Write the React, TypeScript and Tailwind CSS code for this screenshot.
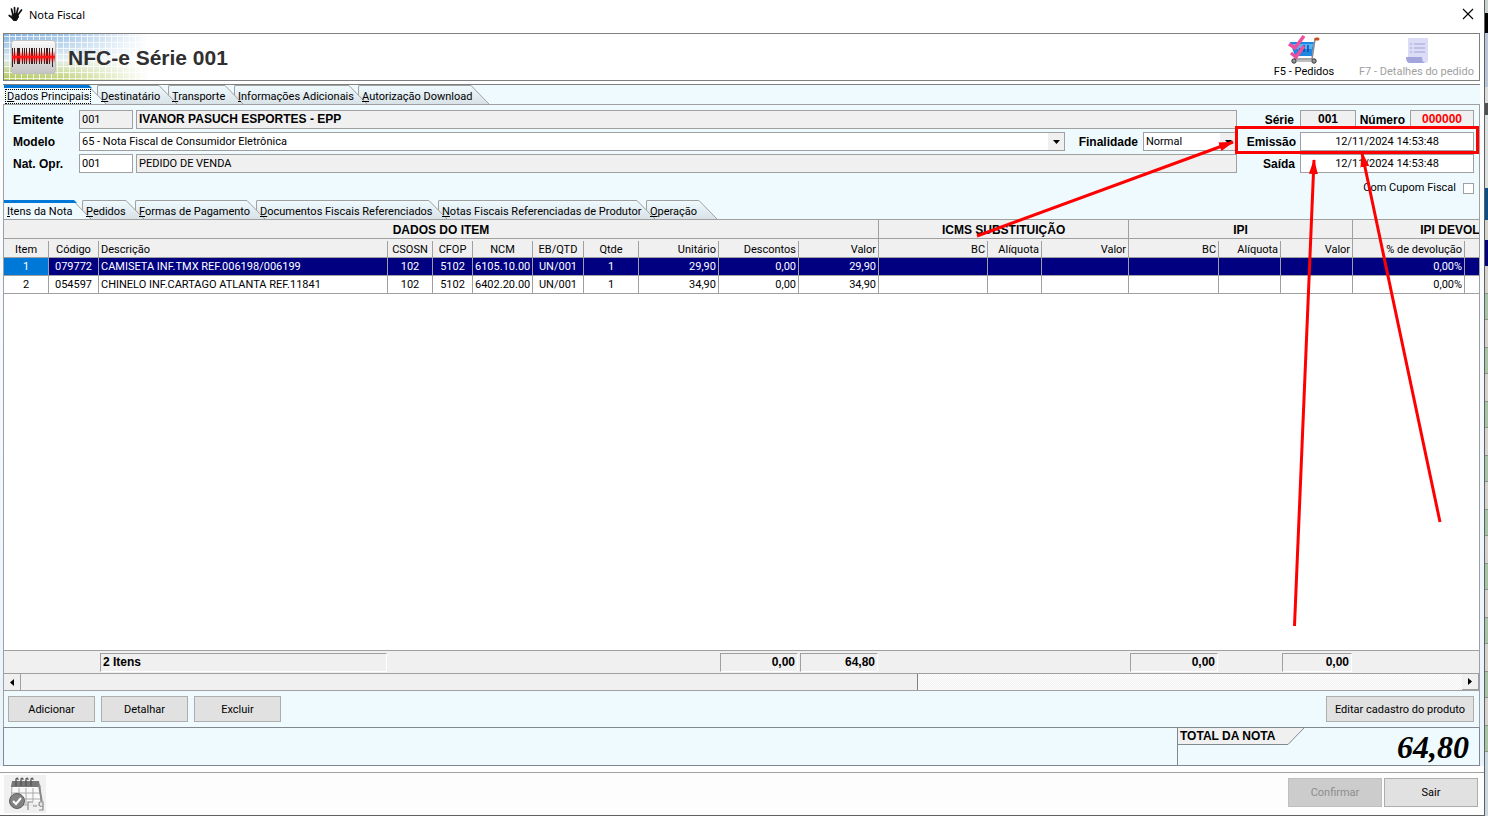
import { useState } from 'react';
import clsx from 'clsx';

interface Tab {
    label: string;
    width: string;
}

interface Column {
    label: string;
    width: number;
    align: 'left' | 'center' | 'right';
    groupEnd?: boolean;
}

interface Item {
    codigo: string;
    descricao: string;
    csosn: string;
    cfop: string;
    ncm: string;
    unidade: string;
    qtde: string;
    unitario: string;
    descontos: string;
    valor: string;
}

const MAIN_TABS: Tab[] = [
    { label: 'Dados Principais', width: 'w-[84px]' },
    { label: 'Destinatário', width: 'w-[62px]' },
    { label: 'Transporte', width: 'w-[57px]' },
    { label: 'Informações Adicionais', width: 'w-[115px]' },
    { label: 'Autorização Download', width: 'w-[113px]' },
];

const ITEM_TABS: Tab[] = [
    { label: 'Itens da Nota', width: 'w-[69px]' },
    { label: 'Pedidos', width: 'w-[44px]' },
    { label: 'Formas de Pagamento', width: 'w-[112px]' },
    { label: 'Documentos Fiscais Referenciados', width: 'w-[173px]' },
    { label: 'Notas Fiscais Referenciadas de Produtor', width: 'w-[199px]' },
    { label: 'Operação', width: 'w-[53px]' },
];

const COLUMNS: Column[] = [
    { label: 'Item', width: 45, align: 'center' },
    { label: 'Código', width: 50, align: 'center' },
    { label: 'Descrição', width: 289, align: 'left' },
    { label: 'CSOSN', width: 45, align: 'center' },
    { label: 'CFOP', width: 40, align: 'center' },
    { label: 'NCM', width: 60, align: 'center' },
    { label: 'EB/QTD', width: 51, align: 'center' },
    { label: 'Qtde', width: 55, align: 'center' },
    { label: 'Unitário', width: 80, align: 'right' },
    { label: 'Descontos', width: 80, align: 'right' },
    { label: 'Valor', width: 80, align: 'right', groupEnd: true },
    { label: 'BC', width: 109, align: 'right' },
    { label: 'Alíquota', width: 54, align: 'right' },
    { label: 'Valor', width: 87, align: 'right', groupEnd: true },
    { label: 'BC', width: 90, align: 'right' },
    { label: 'Alíquota', width: 62, align: 'right' },
    { label: 'Valor', width: 72, align: 'right', groupEnd: true },
    { label: '% de devolução', width: 112, align: 'right' },
    { label: '', width: 118, align: 'right', groupEnd: true },
];

const GROUPS = [
    { label: 'DADOS DO ITEM', span: 11 },
    { label: 'ICMS SUBSTITUIÇÃO', span: 3 },
    { label: 'IPI', span: 3 },
    { label: 'IPI DEVOLUÇÃO', span: 2 },
];

const ITEMS: Item[] = [
    { codigo: '079772', descricao: 'CAMISETA INF.TMX REF.006198/006199', csosn: '102', cfop: '5102', ncm: '6105.10.00', unidade: 'UN/001', qtde: '1', unitario: '29,90', descontos: '0,00', valor: '29,90' },
    { codigo: '054597', descricao: 'CHINELO INF.CARTAGO ATLANTA REF.11841', csosn: '102', cfop: '5102', ncm: '6402.20.00', unidade: 'UN/001', qtde: '1', unitario: '34,90', descontos: '0,00', valor: '34,90' },
];

// footer value by column index
const TOTALS: Record<number, string> = { 2: '2 Itens', 9: '0,00', 10: '64,80', 14: '0,00', 16: '0,00' };

const ALIGN = { left: 'text-left', center: 'text-center', right: 'text-right' };

const BOLD = "font-['Liberation_Sans',Arial,sans-serif] text-[12px] leading-4 font-bold";
const FIELD = 'h-[19px] min-w-0 border border-[#a0a0a0] px-[2px]';

export default function App() {
    const [mainTab, setMainTab] = useState(0);
    const [itemTab, setItemTab] = useState(0);
    const [selected, setSelected] = useState(0);

    return (
        <div className="relative flex min-h-screen overflow-hidden font-[Roboto,'Liberation_Sans',sans-serif] text-[11px] leading-4 text-black">
            <main className="flex min-w-0 flex-1 flex-col bg-white">
                <TitleBar />
                <div className="flex flex-1 flex-col bg-linear-to-b from-white to-[#e8f3fd] pr-[4px] pl-[3px]">
                    <Header />
                    <div className="mt-[3px] flex flex-1 flex-col border-t border-[#808080] bg-[#effaff]">
                        <TabBar tabs={MAIN_TABS} active={mainTab} onChange={setMainTab} focused />
                        <section className="flex flex-1 flex-col border-x border-t border-[#a0a0a0]">
                            <InvoiceForm />
                            <TabBar tabs={ITEM_TABS} active={itemTab} onChange={setItemTab} />
                            <ItemsGrid selected={selected} onSelect={setSelected} />
                            <HorizontalScroll />
                            <div className="flex gap-[6px] py-[5px] pr-[5px] pl-1">
                                <PushButton className="h-[26px] w-[87px]">Adicionar</PushButton>
                                <PushButton className="h-[26px] w-[87px]">Detalhar</PushButton>
                                <PushButton className="h-[26px] w-[87px]">Excluir</PushButton>
                                <PushButton className="ml-auto h-[26px] w-[148px]">Editar cadastro do produto</PushButton>
                            </div>
                        </section>
                        <TotalPanel />
                    </div>
                </div>
                <footer className="mt-[6px] flex h-[44px] items-start border-t border-b border-t-[#a0a0a0] border-b-[#606060] bg-[#fdfdfd] pt-[2px] pr-[6px] pl-1">
                    <button type="button" aria-label="Calendário" className="h-[38px] w-[42px] bg-[#f0f0f0]">
                        <CalendarIcon />
                    </button>
                    <div className="mt-[3px] ml-auto flex gap-[2px]">
                        <PushButton className="h-[29px] w-[94px]" disabled>Confirmar</PushButton>
                        <PushButton className="h-[29px] w-[94px]">Sair</PushButton>
                    </div>
                </footer>
            </main>
            <BackgroundStrip />
            <Annotations />
        </div>
    );
}

function TitleBar() {
    return (
        <header className="flex h-[33px] items-start px-2 pt-[6px]">
            <HandIcon />
            <h1 className="ml-[6px] font-['Noto_Sans',sans-serif] text-[11px] leading-[18px]">Nota Fiscal</h1>
            <button type="button" aria-label="Fechar" className="ml-auto p-[2px]">
                <svg width="12" height="12" viewBox="0 0 12 12" stroke="#000" strokeWidth="1.1">
                    <path d="M1 1l10 10M11 1L1 11" />
                </svg>
            </button>
        </header>
    );
}

function Header() {
    return (
        <div className="relative flex h-[48px] items-center border border-[#808080] bg-white">
            <HeaderPattern />
            <div className="relative ml-[7px]">
                <BarcodeIcon />
            </div>
            <h2 className="relative ml-3 pt-[2px] font-['Liberation_Sans',Arial,sans-serif] text-[21px] leading-6 font-bold text-[#303030]">NFC-e Série 001</h2>
            <div className="ml-auto flex">
                <button type="button" className="mr-[6px] flex w-[86px] flex-col items-center">
                    <CartIcon />
                    <span className="leading-4">F5 - Pedidos</span>
                </button>
                <button type="button" disabled className="flex w-[126px] flex-col items-center pl-px text-[#a0a0a0]">
                    <ScrollIcon />
                    <span className="leading-4 whitespace-nowrap">F7 - Detalhes do pedido</span>
                </button>
            </div>
        </div>
    );
}

interface TabBarProps {
    tabs: Tab[];
    active: number;
    onChange: (index: number) => void;
    focused?: boolean;
}

function TabBar({ tabs, active, onChange, focused }: TabBarProps) {
    return (
        <div role="tablist" className={clsx('isolate flex h-[19px]', focused && 'pl-px')}>
            {tabs.map((tab, i) => (
                <button
                    key={tab.label}
                    type="button"
                    role="tab"
                    aria-selected={i === active}
                    onClick={() => onChange(i)}
                    className={clsx('relative mr-[9px] h-full shrink-0', tab.width)}
                >
                    <span
                        className={clsx(
                            'absolute inset-0 z-0',
                            i === active
                                ? 'border-t-[3px] border-[#0078d7] bg-[#effaff]'
                                : 'rounded-tl-[2px] border-t border-l border-[#a0a0a0] bg-linear-to-b from-[#effaff] to-[#d9e2e6]'
                        )}
                    />
                    <TabSlant active={i === active} />
                    <span className={clsx('relative z-20 flex h-full items-end whitespace-nowrap', i > 0 ? 'pl-1' : focused ? 'pl-px' : 'pl-[3px]')}>
                        <span className={clsx('h-[15px]', focused && i === active ? 'border border-dotted border-black px-px leading-[13px]' : 'leading-4')}>
                            <span className="underline decoration-1 underline-offset-1">{tab.label[0]}</span>
                            {tab.label.slice(1)}
                        </span>
                    </span>
                </button>
            ))}
        </div>
    );
}

function TabSlant({ active }: { active: boolean }) {
    return (
        <svg className="absolute top-0 left-full z-10" width="18" height="19" viewBox="0 0 18 19">
            <defs>
                <linearGradient id="tab-fill" x1="0" y1="0" x2="0" y2="1">
                    <stop offset="0" stopColor="#effaff" />
                    <stop offset="1" stopColor="#d9e2e6" />
                </linearGradient>
            </defs>
            <path d="M0 0L18 19H0z" fill={active ? '#effaff' : 'url(#tab-fill)'} />
            <path d="M0 0.5L18 19" stroke="#a0a0a0" />
            {active && <path d="M0 0h1l3 3H0z" fill="#0078d7" />}
        </svg>
    );
}

function InvoiceForm() {
    const label = clsx(BOLD, 'whitespace-nowrap');
    return (
        <form className="h-[95px] pt-[5px] pr-[5px] pl-[9px]">
            <div className="flex">
                <div className="flex min-w-0 flex-1 flex-col gap-[3px]">
                    <div className="flex items-center gap-[3px]">
                        <label htmlFor="emitente" className={clsx(label, 'w-[63px]')}>Emitente</label>
                        <input id="emitente" readOnly defaultValue="001" className={clsx(FIELD, 'w-[54px] bg-[#f0f0f0]')} />
                        <input aria-label="Nome do emitente" readOnly defaultValue="IVANOR PASUCH ESPORTES - EPP" className={clsx(FIELD, BOLD, 'flex-1 bg-[#f0f0f0] pb-[2px]')} />
                    </div>
                    <div className="flex items-center">
                        <label htmlFor="modelo" className={clsx(label, 'w-[66px]')}>Modelo</label>
                        <Dropdown id="modelo" value="65 - Nota Fiscal de Consumidor Eletrônica" className="flex-1" />
                        <label htmlFor="finalidade" className={clsx(label, 'w-[78px] pr-[5px] text-right')}>Finalidade</label>
                        <Dropdown id="finalidade" value="Normal" className="w-[94px]" />
                    </div>
                    <div className="flex items-center gap-[3px]">
                        <label htmlFor="natureza" className={clsx(label, 'w-[63px]')}>Nat. Opr.</label>
                        <input id="natureza" defaultValue="001" className={clsx(FIELD, 'w-[54px] bg-white')} />
                        <input aria-label="Descrição da natureza" readOnly defaultValue="PEDIDO DE VENDA" className={clsx(FIELD, 'flex-1 bg-[#f0f0f0]')} />
                    </div>
                </div>
                <div className="flex w-[237px] flex-col gap-[3px]">
                    <div className="flex items-center">
                        <label htmlFor="serie" className={clsx(label, 'w-[63px] pr-[6px] text-right')}>Série</label>
                        <input id="serie" readOnly defaultValue="001" className={clsx(FIELD, BOLD, 'w-[56px] bg-[#f0f0f0] pb-[2px] text-center')} />
                        <label htmlFor="numero" className={clsx(label, 'w-[54px] pr-[5px] text-right')}>Número</label>
                        <input id="numero" readOnly defaultValue="000000" className={clsx(FIELD, BOLD, 'w-[64px] bg-[#f0f0f0] pb-[2px] text-center text-[#ff0000]')} />
                    </div>
                    <div className="flex items-center">
                        <label htmlFor="emissao" className={clsx(label, 'w-[63px] pr-1 text-right')}>Emissão</label>
                        <input id="emissao" defaultValue="12/11/2024 14:53:48" className={clsx(FIELD, 'flex-1 bg-white text-center')} />
                    </div>
                    <div className="flex items-center">
                        <label htmlFor="saida" className={clsx(label, 'w-[63px] pr-[5px] text-right')}>Saída</label>
                        <input id="saida" defaultValue="12/11/2024 14:53:48" className={clsx(FIELD, 'flex-1 bg-white text-center')} />
                    </div>
                </div>
            </div>
            <div className="mt-[7px] flex items-center justify-end gap-[7px]">
                <label htmlFor="cupom">Com Cupom Fiscal</label>
                <input id="cupom" type="checkbox" className="size-[11px] appearance-none border border-[#a0a0a0] bg-white checked:bg-[#0078d7]" />
            </div>
        </form>
    );
}

function Dropdown({ id, value, className }: { id: string; value: string; className: string }) {
    return (
        <div className={clsx('relative min-w-0', className)}>
            <select id={id} defaultValue={value} className="block h-[19px] w-full appearance-none border border-[#a0a0a0] bg-white px-[2px] pt-px leading-4">
                <option>{value}</option>
            </select>
            <span className="pointer-events-none absolute top-px right-px flex h-[17px] w-4 items-center justify-center bg-[#f0f0f0]">
                <svg width="7" height="4" viewBox="0 0 7 4"><path d="M0 0h7L3.5 4z" /></svg>
            </span>
        </div>
    );
}

function GridColumns() {
    return (
        <colgroup>
            {COLUMNS.map((col, i) => (
                <col key={i} style={{ width: col.width }} />
            ))}
        </colgroup>
    );
}

function ItemsGrid({ selected, onSelect }: { selected: number; onSelect: (index: number) => void }) {
    return (
        <div className="flex flex-1 flex-col overflow-hidden border-t border-[#a0a0a0] bg-white">
            <div className="flex-1">
                <table className="w-[1579px] table-fixed border-separate border-spacing-0">
                    <GridColumns />
                    <thead className="bg-[#f0f0f0]">
                        <tr>
                            {GROUPS.map(group => (
                                <th key={group.label} colSpan={group.span} className={clsx(BOLD, 'h-[19px] border-r border-b border-[#a0a0a0] px-0 pt-[2px] pb-0')}>
                                    {group.label}
                                </th>
                            ))}
                        </tr>
                        <tr>
                            {COLUMNS.map((col, i) => (
                                <th key={i} className={clsx('h-[19px] border-b border-[#a0a0a0] p-0 font-normal', col.groupEnd && 'border-r')}>
                                    <div className={clsx('mt-[2px] h-4 px-[2px] leading-[18px] whitespace-nowrap', ALIGN[col.align], !col.groupEnd && 'border-r border-[#a0a0a0]')}>
                                        {col.label}
                                    </div>
                                </th>
                            ))}
                        </tr>
                    </thead>
                    <tbody>
                        {ITEMS.map((item, row) => (
                            <tr key={item.codigo} onClick={() => onSelect(row)} className={row === selected ? 'bg-[#000080] text-white' : 'bg-white'}>
                                {[String(row + 1), ...Object.values(item), '', '', '', '', '', '', '0,00%', ''].map((value, i) => (
                                    <td
                                        key={i}
                                        className={clsx(
                                            'h-[18px] border-r border-b border-[#a0a0a0] px-[2px] pt-px pb-0 leading-4 whitespace-nowrap',
                                            ALIGN[COLUMNS[i].align],
                                            i === 0 && row === selected && 'bg-[#0078d7]'
                                        )}
                                    >
                                        {value}
                                    </td>
                                ))}
                            </tr>
                        ))}
                    </tbody>
                </table>
            </div>
            <div className="border-t border-[#a0a0a0] bg-[#f0f0f0] pt-[2px] pb-px">
                <table className="w-[1579px] table-fixed border-separate border-spacing-0">
                    <GridColumns />
                    <tbody>
                        <tr>
                            {COLUMNS.map((col, i) => (
                                <td key={i} className="h-[19px] px-px py-0">
                                    {TOTALS[i] && (
                                        <div className={clsx(BOLD, 'h-[19px] border border-t-[#a0a0a0] border-r-white border-b-white border-l-[#a0a0a0] px-[2px]', ALIGN[col.align])}>
                                            {TOTALS[i]}
                                        </div>
                                    )}
                                </td>
                            ))}
                        </tr>
                    </tbody>
                </table>
            </div>
        </div>
    );
}

function HorizontalScroll() {
    return (
        <div className="flex h-[18px] border-t border-b border-[#a0a0a0] bg-[repeating-conic-gradient(#f0f0f0_0_25%,#ffffff_0_50%)] bg-size-[2px_2px]">
            <button type="button" aria-label="Rolar para a esquerda" className="flex w-[17px] items-center justify-center border-r border-[#a0a0a0] bg-[#f0f0f0]">
                <svg width="4" height="7" viewBox="0 0 4 7"><path d="M4 0v7L0 3.5z" /></svg>
            </button>
            <div className="flex-28 border-r border-[#808080] bg-[#f0f0f0]" />
            <div className="flex-17" />
            <button type="button" aria-label="Rolar para a direita" className="flex w-[17px] items-center justify-center border-r border-b border-[#a0a0a0] bg-[#f0f0f0]">
                <svg width="4" height="7" viewBox="0 0 4 7"><path d="M0 0v7l4-3.5z" /></svg>
            </button>
        </div>
    );
}

function PushButton({ children, className, disabled }: { children: string; className: string; disabled?: boolean }) {
    return (
        <button
            type="button"
            disabled={disabled}
            className={clsx('border pt-px', disabled ? 'border-[#bfbfbf] bg-[#cccccc] text-[#8c8c8c]' : 'border-[#adadad] bg-[#e1e1e1]', className)}
        >
            {children}
        </button>
    );
}

function TotalPanel() {
    return (
        <div className="flex h-[39px] justify-end border border-[#808890] bg-[#effaff]">
            <div className="flex w-[302px] items-start justify-between border-l border-[#808890]">
                <div className={clsx('flex h-[17px]', BOLD)}>
                    <span className="w-[102px] border-b border-[#808890] bg-[#f0f0f0] pl-[2px] whitespace-nowrap">TOTAL DA NOTA</span>
                    <svg width="24" height="17" viewBox="0 0 24 17">
                        <path d="M0 0h24L8 16.500H0z" fill="#f0f0f0" />
                        <path d="M0 16.500H8L24 0" fill="none" stroke="#808890" />
                    </svg>
                </div>
                <output className="pr-[10px] font-['Liberation_Serif','Times_New_Roman',serif] text-[32px] leading-[38px] font-bold italic">64,80</output>
            </div>
        </div>
    );
}

/* ---- drawings ---- */

function HandIcon() {
    return (
        <svg width="15" height="16" viewBox="0 0 15 16" fill="none" stroke="#111" strokeLinecap="round">
            <path d="M4.500 8.500L9.500 7.500 10.500 11 8.500 14.500H5.500L4 12z" fill="#111" />
            <path d="M5 9L3.500 3M6.800 8L6.500 1.500M8.500 8L10 2M9.800 9L13.500 4M5 12.500L1.200 9.500" strokeWidth="1.700" />
        </svg>
    );
}

function HeaderPattern() {
    return (
        <svg className="absolute top-0 left-0" width="145" height="46" viewBox="0 0 145 46">
            <defs>
                <linearGradient id="sky" x1="0" y1="0" x2="0" y2="1">
                    <stop offset="0" stopColor="#86b4e2" />
                    <stop offset=".55" stopColor="#e2eef0" />
                    <stop offset="1" stopColor="#b0c650" />
                </linearGradient>
                <linearGradient id="fade" x1="0" y1="0" x2="1" y2="0">
                    <stop offset="0" stopColor="#fff" stopOpacity="0" />
                    <stop offset=".4" stopColor="#fff" stopOpacity=".2" />
                    <stop offset="1" stopColor="#fff" />
                </linearGradient>
                <pattern id="mesh" width="6" height="6" patternUnits="userSpaceOnUse">
                    <path d="M5.500 0v6M0 2.500h6" stroke="#fff" strokeOpacity=".75" />
                </pattern>
            </defs>
            <rect width="145" height="46" fill="url(#sky)" />
            <rect width="145" height="46" fill="url(#mesh)" />
            <rect width="145" height="46" fill="url(#fade)" />
        </svg>
    );
}

function BarcodeIcon() {
    const bars = [1, 3, 6, 8, 11, 13, 15, 18, 20, 23, 25, 28, 30, 33, 35, 38, 41];
    return (
        <svg width="45" height="36" viewBox="0 0 45 36">
            <defs>
                <linearGradient id="card" x1="0" y1="0" x2="0" y2="1">
                    <stop offset="0" stopColor="#fafafa" />
                    <stop offset="1" stopColor="#c4c4c4" />
                </linearGradient>
                <linearGradient id="laser" x1="0" y1="0" x2="0" y2="1">
                    <stop offset="0" stopColor="#ff0000" stopOpacity="0" />
                    <stop offset=".5" stopColor="#ff0000" stopOpacity=".8" />
                    <stop offset="1" stopColor="#ff0000" stopOpacity="0" />
                </linearGradient>
            </defs>
            <rect x="0.500" y="1.500" width="44" height="33" rx="3" fill="url(#card)" stroke="#c0c0c0" />
            {bars.map((x, i) => (
                <rect key={x} x={x} y="9" width={i % 6 === 2 ? 2 : 1} height={i === 0 || i === 16 ? 19 : 16} fill="#402020" />
            ))}
            <rect x="1" y="12" width="43" height="12" fill="url(#laser)" />
            <rect x="1" y="17" width="43" height="2" fill="#ff1515" />
        </svg>
    );
}

function CartIcon() {
    return (
        <svg width="32" height="29" viewBox="0 0 32 29" fill="none">
            <path d="M2 7h24l-2 14H7z" fill="#1d86e0" />
            <path d="M4 9h21l-1 5H6z" fill="#58b4f4" />
            <path d="M16 10v7M20 10v7M12 13v5" stroke="#0b4fa8" strokeWidth="1.500" />
            <path d="M29 4h-2l-3 20H6" stroke="#8b8b90" strokeWidth="1.600" />
            <path d="M28 4h2" stroke="#c8501a" strokeWidth="3" strokeLinecap="round" />
            <circle cx="6" cy="26" r="2.200" fill="#999" stroke="#333" />
            <circle cx="26" cy="26" r="2.200" fill="#999" stroke="#333" />
            <path d="M9 26h14" stroke="#a8a8a8" strokeWidth="1.500" />
            <path d="M1 9l6 4L16 1M3 18l5 4L16 11" stroke="#f04fa0" strokeWidth="3.500" />
        </svg>
    );
}

function ScrollIcon() {
    return (
        <svg width="24" height="29" viewBox="0 0 24 29">
            <path d="M3 3h20v22q0 3-3 3H4l-2-6h1z" fill="#dcdcf6" />
            <path d="M1 22h16q0 5 3 6H5q-4 0-4-6z" fill="#a3a6dc" />
            <path d="M5 9h2M5 13h2M5 17h2M9 9h11M9 13h11M9 17h11" stroke="#b4b6e2" strokeWidth="1.500" />
        </svg>
    );
}

function CalendarIcon() {
    return (
        <svg width="42" height="38" viewBox="0 0 42 38" fill="none">
            <path d="M8 10h28l1 20H7z" fill="#fafafa" stroke="#aaa" />
            <path d="M8 6h27l1 6H7z" fill="#787878" />
            <path d="M7 18h29M7 24h30M15 13v17M22 13v17M29 13v17" stroke="#aaa" />
            <path d="M35 10l3 18" stroke="#888" strokeWidth="2" />
            <path d="M12 11V4q2-2 2 1M17 11V4q2-2 2 1M22 11V4q2-2 2 1M27 11V4q2-2 2 1" stroke="#555" strokeWidth="1.300" />
            <path d="M23 26h18v10H23z" fill="#f0f0f0" fillOpacity=".8" />
            <path d="M24 35v-8h5M29 31h4M39 31q-4 1-4-2 0-3 4-2v8h-4" stroke="#8a8a8a" strokeWidth="1.200" />
            <circle cx="13" cy="26" r="7.500" fill="#828282" stroke="#606060" />
            <path d="M9 26l3 3 5-6" stroke="#fff" strokeWidth="2" />
        </svg>
    );
}

// sliver of the application behind the window
function BackgroundStrip() {
    return (
        <div aria-hidden="true" className="flex w-1 flex-col border-l border-[#606060] bg-[#d5d1cd]">
            <div className="h-[13px] bg-[#c8d0d0]" />
            <div className="h-5 bg-black" />
            <div className="h-[54px] bg-[#b9c6d8]" />
            <div className="h-[16px] bg-[#dcdcdc]" />
            <div className="h-[12px] bg-[#505050]" />
            <div className="h-[73px] bg-[#dcdfe0]" />
            <div className="h-[32px] bg-[#084e8a]" />
            <div className="h-[20px] bg-[#d5d1cd]" />
            <div className="h-[26px] bg-[#000080]" />
            {Array.from({ length: 9 }, (_, i) => (
                <div key={i} className="h-[54px] border-b border-[#909090] pt-[27px]">
                    <div className="h-full border-t border-[#909090] bg-[#a8c4a6]" />
                </div>
            ))}
            <div className="flex-1 bg-[#c9d8e0]" />
        </div>
    );
}

function Annotations() {
    return (
        <svg className="pointer-events-none absolute top-0 right-0" width="1488" height="816" viewBox="0 0 1488 816" fill="none" stroke="#ff0000" strokeWidth="3">
            <defs>
                <marker id="arrow" markerUnits="userSpaceOnUse" markerWidth="15" markerHeight="10" refX="14" refY="5" orient="auto">
                    <path d="M0 0.500L15 5L0 9.500z" fill="#ff0000" stroke="none" />
                </marker>
            </defs>
            <rect x="1236.500" y="127.500" width="241" height="25" />
            <path d="M977 236L1233 142" markerEnd="url(#arrow)" />
            <path d="M1294.500 626L1314 160" markerEnd="url(#arrow)" />
            <path d="M1440 522L1362 153" markerEnd="url(#arrow)" />
        </svg>
    );
}
